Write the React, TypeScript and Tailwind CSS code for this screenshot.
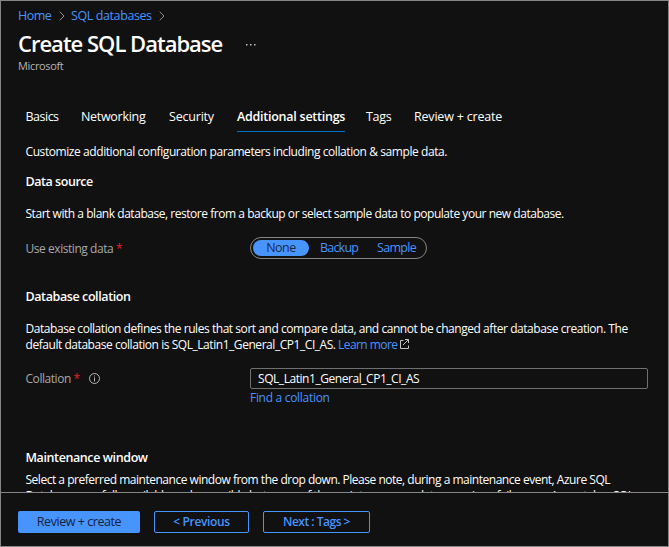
import type { ReactNode } from 'react';

function Crumb({ children, className }: { children: ReactNode; className: string }) {
  return <a className={`whitespace-nowrap text-[#4894fe] ${className}`}>{children}</a>;
}

function Chevron() {
  return (
    <svg width="6" height="10" viewBox="0 0 6 10" fill="none" stroke="#8f8f8f" strokeWidth="1">
      <path d="M.7.7 5 5 .7 9.3" />
    </svg>
  );
}

function Tab({ label, className, active = false }: { label: string; className: string; active?: boolean }) {
  return (
    <div className={`flex h-[31px] shrink-0 flex-col whitespace-nowrap ${active ? 'font-semibold' : ''} ${className}`}>
      <span className="h-[30px] leading-[31px]">{label}</span>
      {active && <span className="h-px bg-[#0072c9]" />}
    </div>
  );
}

function Line({ children, className }: { children: ReactNode; className: string }) {
  return <div className={`h-4 whitespace-nowrap leading-4 ${className}`}>{children}</div>;
}

export default function App() {
  return (
    <div className="flex h-[547px] w-[669px] flex-col overflow-hidden border border-[#858585] bg-[#111111] font-['Open_Sans',sans-serif] text-[12px] text-white">
      <header className="h-[100px] shrink-0 pl-[17px]">
        <nav className="flex h-[30px] items-center text-[12.5px]">
          <Crumb className="w-[41px] tracking-[-0.5px]">Home</Crumb>
          <Chevron />
          <Crumb className="ml-[6px] w-[88px] tracking-[-0.4px]">SQL databases</Crumb>
          <Chevron />
        </nav>
        <div className="flex h-[27px] items-center">
          <h1 className="-mt-[2px] w-[228px] whitespace-nowrap text-[22px] font-semibold tracking-[-1px]">Create SQL Database</h1>
          <svg width="10" height="2" viewBox="0 0 10 2" fill="#c0c0c0">
            <rect width="1.5" height="1.5" />
            <rect x="4" width="1.5" height="1.5" />
            <rect x="8" width="1.5" height="1.5" />
          </svg>
        </div>
        <div className="h-4 text-[11px] leading-4 tracking-[-0.35px] text-[#b5b5b5]">Microsoft</div>
      </header>

      <main className="h-[391px] shrink-0 overflow-hidden pl-[24.5px]">
        <div className="flex h-[31px] text-[12.5px]">
          <Tab label="Basics" className="mr-[22.5px] w-[33px] tracking-[-0.5px]" />
          <Tab label="Networking" className="mr-[23px] w-[65px] tracking-[-0.3px]" />
          <Tab label="Security" className="mr-[23px] w-[45px] tracking-[-0.2px]" />
          <Tab active label="Additional settings" className="mr-[21px] w-[108px] tracking-[-0.25px]" />
          <Tab label="Tags" className="mr-[23px] w-[25px] tracking-[-0.3px]" />
          <Tab label="Review + create" className="w-[89px] tracking-[-0.2px]" />
        </div>
        <Line className="mt-[12px] tracking-[-0.42px]">Customize additional configuration parameters including collation &amp; sample data.</Line>
        <Line className="mt-[14px] text-[12.5px] font-semibold tracking-[-0.45px]">Data source</Line>
        <Line className="mt-[16px] tracking-[-0.46px]">Start with a blank database, restore from a backup or select sample data to populate your new database.</Line>
        <div className="mt-[15px] flex h-[22px] items-center">
          <div className="mt-[2px] w-[224.5px] tracking-[-0.45px] text-[#a8a8a8]">
            Use existing data <span className="text-[#e8202c]">*</span>
          </div>
          <div className="flex h-[22px] w-[177px] items-center rounded-full border border-[#858585] pl-[2px] text-[12.5px] leading-none text-[#4894fe]">
            <span className="flex h-4 w-[56px] items-center justify-center rounded-full bg-[#4894fe] tracking-[-0.5px] text-[#1b2a44]">None</span>
            <span className="ml-[11px] w-[57px] tracking-[-0.8px]">Backup</span>
            <span className="tracking-[-0.7px]">Sample</span>
          </div>
        </div>
        <Line className="mt-[30px] text-[12.5px] font-semibold tracking-[-0.4px]">Database collation</Line>
        <Line className="mt-[16px] tracking-[-0.45px]">Database collation defines the rules that sort and compare data, and cannot be changed after database creation. The</Line>
        <Line className="flex items-center">
          <span className="w-[312.5px] tracking-[-0.45px]">default database collation is SQL_Latin1_General_CP1_CI_AS.</span>
          <a className="w-[62px] tracking-[-0.55px] text-[#4894fe]">Learn more</a>
          <svg width="9" height="10" viewBox="0 0 9 10" fill="none" stroke="#c4c4c4" strokeWidth="1" className="-mt-[3px]">
            <path d="M3.5 1.5h-3v8h8v-3M5 .5h3.5V4M8.3.7 3 6" />
          </svg>
        </Line>
        <div className="mt-[15px] flex h-[21px] items-center">
          <div className="w-[63.5px] tracking-[-0.45px] text-[#a8a8a8]">
            Collation <span className="text-[#e8202c]">*</span>
          </div>
          <svg width="11" height="11" viewBox="0 0 11 11" fill="none" stroke="#b5b5b5" strokeWidth="1">
            <circle cx="5.5" cy="5.5" r="5" />
            <path d="M5.5 4.5v4M5.5 2.5v1" />
          </svg>
          <div className="ml-[150px] flex h-[21px] w-[398px] items-center rounded-[2px] border border-[#707070] pl-[7px] text-[12px] tracking-[-0.45px]">
            SQL_Latin1_General_CP1_CI_AS
          </div>
        </div>
        <Line className="mt-px pl-[224.5px] tracking-[-0.3px] text-[#4894fe]">Find a collation</Line>
        <Line className="mt-[44px] text-[12.5px] font-semibold tracking-[-0.4px]">Maintenance window</Line>
        <Line className="mt-[6px] tracking-[-0.48px]">Select a preferred maintenance window from the drop down. Please note, during a maintenance event, Azure SQL</Line>
        <Line className="tracking-[-0.5px]">Databases are fully available and accessible but some of the maintenance updates require a failover as Azure takes SQL</Line>
      </main>

      <footer className="flex flex-1 items-start border-t border-[#858585] pl-[17px] pt-[18px] text-[12.5px]">
        <button className="h-[22px] w-[122px] rounded-[2px] bg-[#4894fe] leading-[20px] tracking-[-0.45px] text-[#14233c]">Review + create</button>
        <button className="ml-[14px] h-[22px] w-[95px] rounded-[2px] border border-[#4894fe] text-[12px] font-semibold leading-[20px] tracking-[-0.35px] text-[#4894fe]">&lt; Previous</button>
        <button className="ml-[14px] h-[22px] w-[107px] rounded-[2px] border border-[#4894fe] text-[12px] font-semibold leading-[20px] tracking-[-0.5px] text-[#4894fe]">Next : Tags &gt;</button>
      </footer>
    </div>
  );
}
